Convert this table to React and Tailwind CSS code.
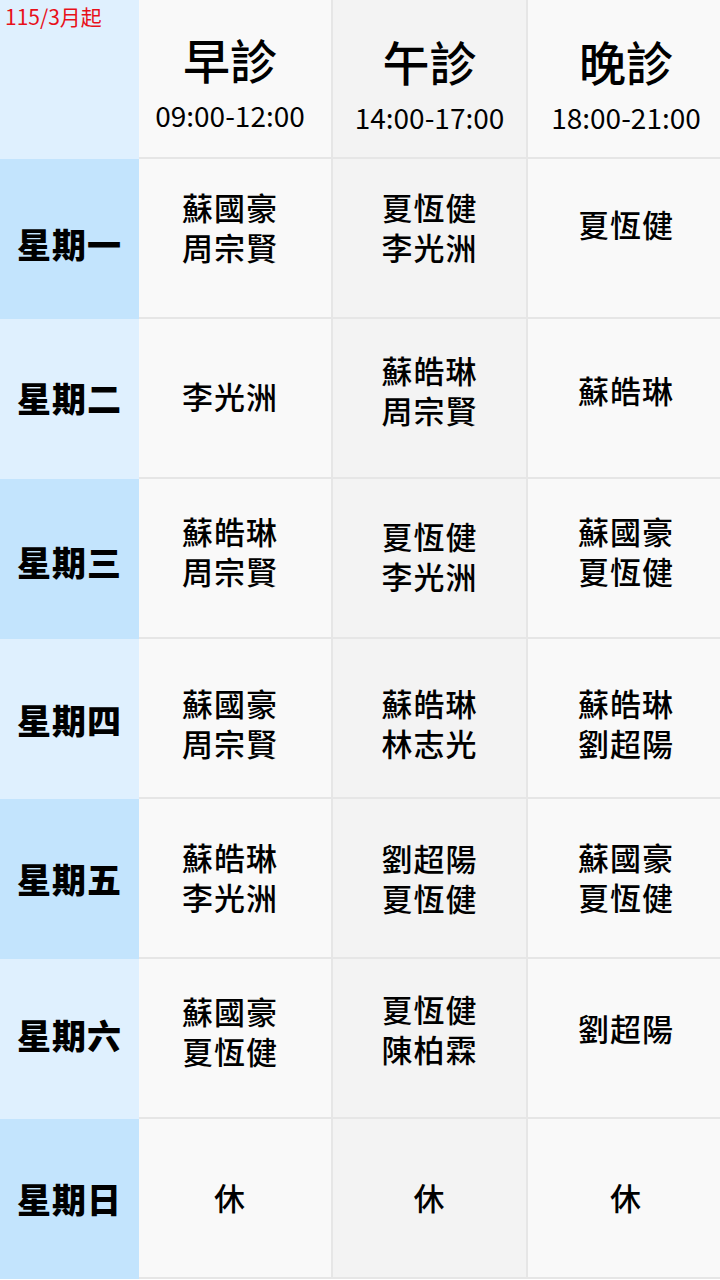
const FONT = { fontFamily: '"Noto Sans CJK TC", "Noto Sans", sans-serif' };

const rows = [
  {
    day: "星期一",
    dark: true,
    dayPad: "pt-[8px]",
    cells: [
      { names: ["蘇國豪", "周宗賢"], pad: "pb-[22px]" },
      { names: ["夏恆健", "李光洲"], pad: "pb-[22px]" },
      { names: ["夏恆健"], pad: "pb-[28px]" },
    ],
  },
  {
    day: "星期二",
    dark: false,
    dayPad: "pb-[4px]",
    cells: [
      { names: ["李光洲"], pad: "pb-[4px]" },
      { names: ["蘇皓琳", "周宗賢"], pad: "pb-[16px]" },
      { names: ["蘇皓琳"], pad: "pb-[16px]" },
    ],
  },
  {
    day: "星期三",
    dark: true,
    dayPad: "pt-[4px]",
    cells: [
      { names: ["蘇皓琳", "周宗賢"], pad: "pb-[14px]" },
      { names: ["夏恆健", "李光洲"], pad: "pb-[4px]" },
      { names: ["蘇國豪", "夏恆健"], pad: "pb-[14px]" },
    ],
  },
  {
    day: "星期四",
    dark: false,
    dayPad: "",
    cells: [
      { names: ["蘇國豪", "周宗賢"], pad: "pt-[10px]" },
      { names: ["蘇皓琳", "林志光"], pad: "pt-[10px]" },
      { names: ["蘇皓琳", "劉超陽"], pad: "pt-[10px]" },
    ],
  },
  {
    day: "星期五",
    dark: true,
    dayPad: "pb-[2px]",
    cells: [
      { names: ["蘇皓琳", "李光洲"], pad: "pb-[2px]" },
      { names: ["劉超陽", "夏恆健"], pad: "" },
      { names: ["蘇國豪", "夏恆健"], pad: "pb-[2px]" },
    ],
  },
  {
    day: "星期六",
    dark: false,
    dayPad: "pb-[10px]",
    cells: [
      { names: ["蘇國豪", "夏恆健"], pad: "pb-[14px]" },
      { names: ["夏恆健", "陳柏霖"], pad: "pb-[18px]" },
      { names: ["劉超陽"], pad: "pb-[20px]" },
    ],
  },
  {
    day: "星期日",
    dark: true,
    dayPad: "pb-[2px]",
    cells: [
      { names: ["休"], pad: "pb-[2px]" },
      { names: ["休"], pad: "pb-[2px]" },
      { names: ["休"], pad: "pb-[2px]" },
    ],
  },
];

// morning / afternoon / evening columns
const colClass = [
  "w-[194px] bg-[#f9f9f9] border-r-2 pr-[10px]",
  "w-[195px] bg-[#f3f3f3] border-r-2",
  "flex-1 bg-[#f9f9f9] pl-[4px]",
];

const sessions = [
  { title: "早診", time: "09:00-12:00", pad: "pt-[6px]" },
  { title: "午診", time: "14:00-17:00", pad: "pt-[10px]" },
  { title: "晚診", time: "18:00-21:00", pad: "pt-[10px]" },
];

export default function App() {
  return (
    <div className="w-[720px] h-[1280px] overflow-hidden bg-white text-black" style={FONT}>
      {/* Header */}
      <div className="flex h-[159px]">
        <div className="w-[139px] bg-[#dff0fe] px-[5px] pt-[2px]">
          <span className="text-[21px] leading-[28px] text-[#e8101a]">115/3月起</span>
        </div>
        {sessions.map((s, i) => (
          <div
            key={s.title}
            className={`${colClass[i]} border-b-2 border-[#e6e6e6] flex flex-col items-center justify-center ${s.pad}`}
          >
            <div className="text-[47px] leading-[56px] font-medium">{s.title}</div>
            <div className="text-[28px] leading-[36px] mt-[10px]">{s.time}</div>
          </div>
        ))}
      </div>

      {/* Schedule rows */}
      {rows.map((r) => (
        <div key={r.day} className="flex h-[160px]">
          <div
            className={`w-[139px] flex items-center justify-center ${r.dark ? "bg-[#c3e4fd]" : "bg-[#dff0fe]"} ${r.dayPad}`}
          >
            <span className="text-[34px] font-black tracking-[1px]">{r.day}</span>
          </div>
          {r.cells.map((c, i) => (
            <div
              key={i}
              className={`${colClass[i]} border-b-2 border-[#e6e6e6] flex items-center justify-center ${c.pad}`}
            >
              <p className="text-[31px] leading-[40px] font-medium tracking-[1px] text-center">
                {c.names.map((n, j) => (
                  <span key={j}>
                    {j > 0 && <br />}
                    {n}
                  </span>
                ))}
              </p>
            </div>
          ))}
        </div>
      ))}
    </div>
  );
}
